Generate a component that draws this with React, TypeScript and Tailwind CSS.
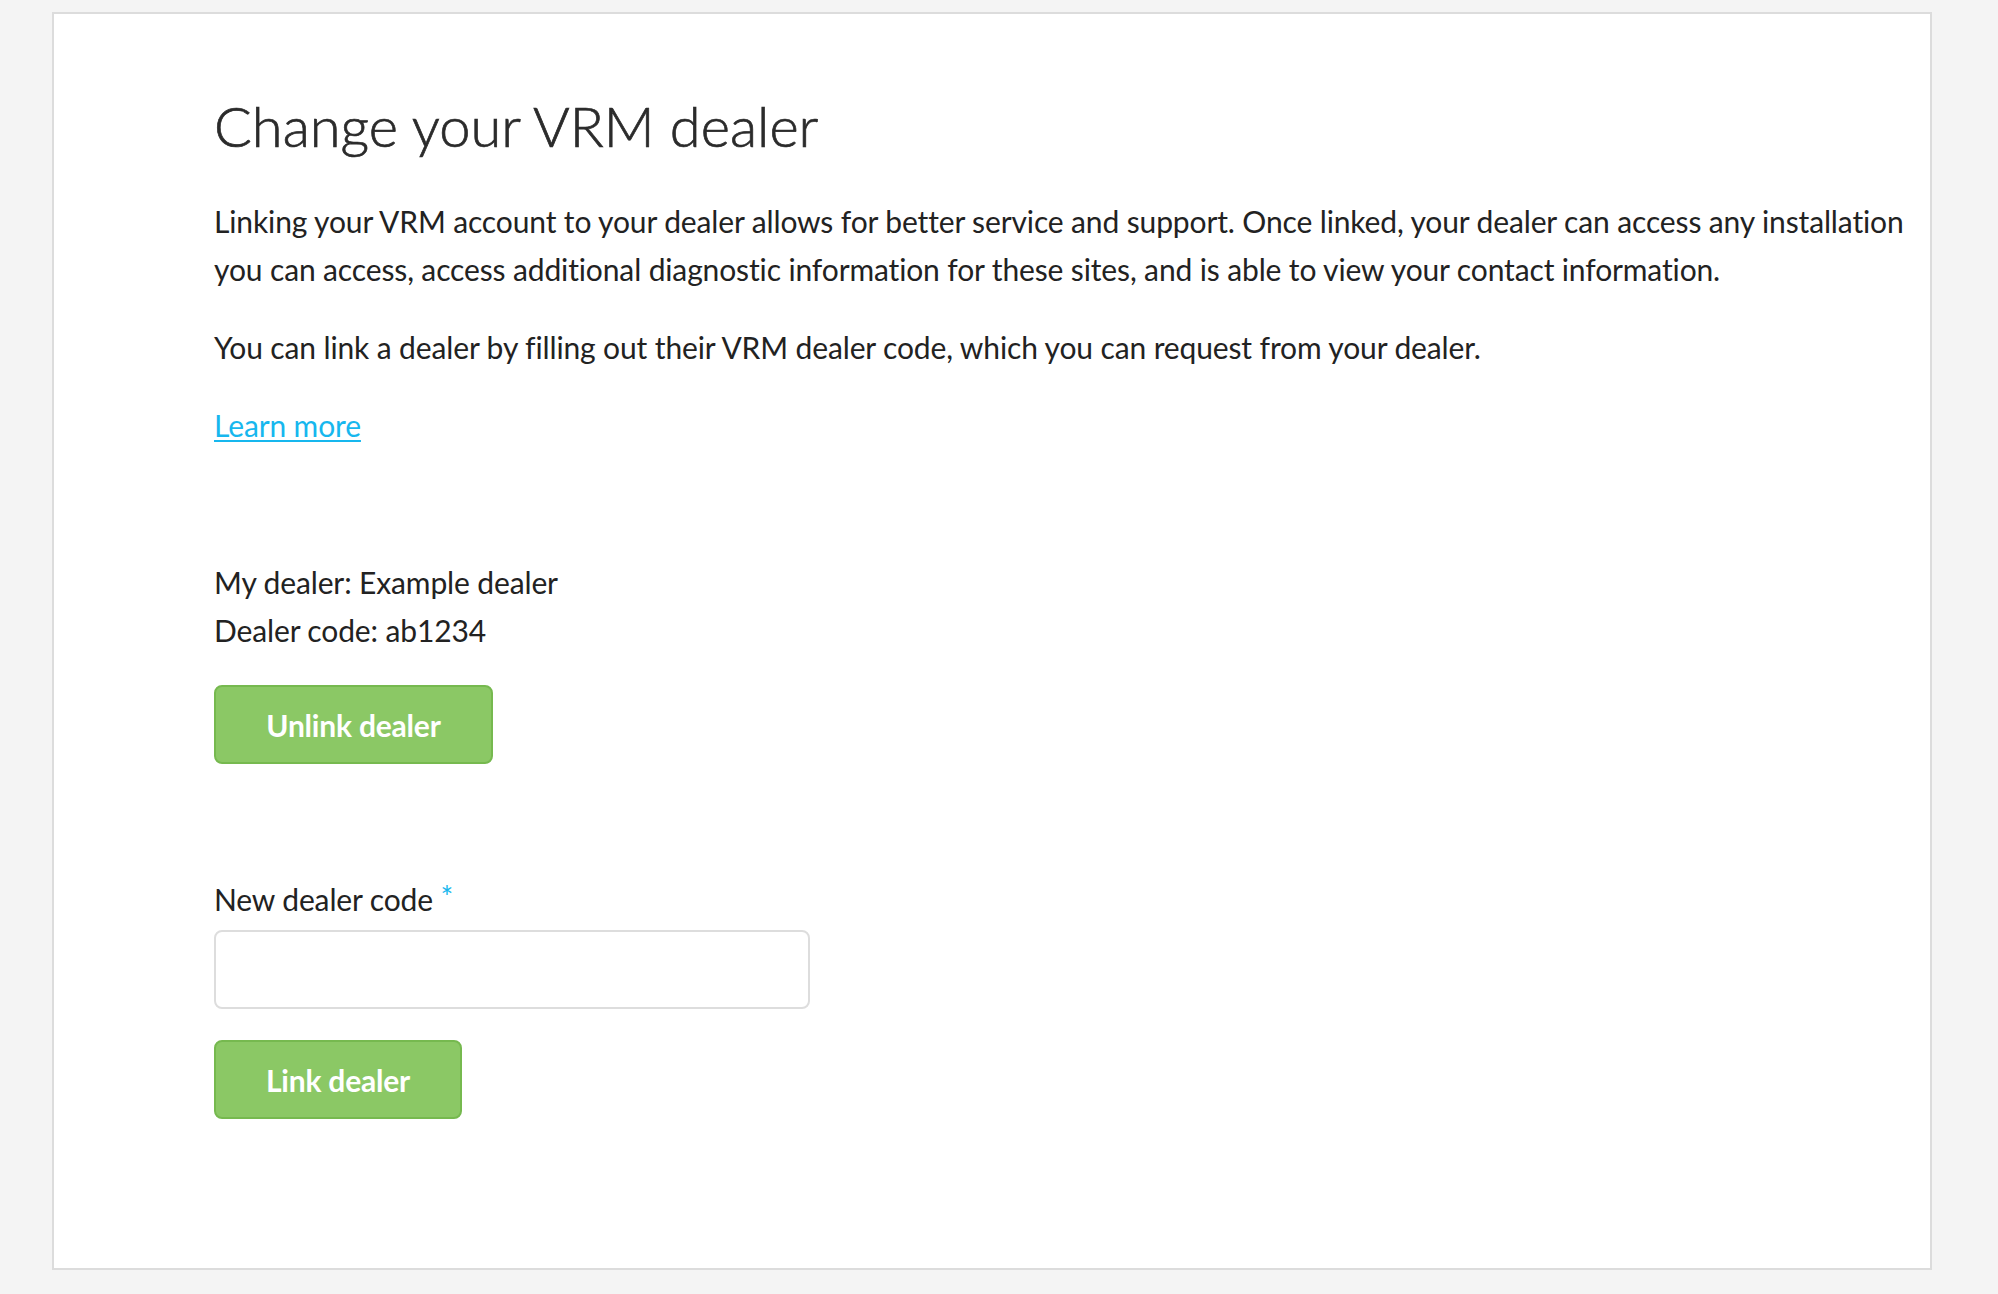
const textFont = { fontFamily: '"Lato", "Liberation Sans", sans-serif' };

const GreenButton = ({ label, width }: { label: string; width: string }) => {
  return (
    <button
      type="button"
      className={`${width} h-[79px] rounded-[8px] border-2 border-[#76b94f] bg-[#8bc865] text-white text-[30px] font-bold leading-none tracking-[-0.2px]`}
    >
      {label}
    </button>
  );
};

const App = () => {
  return (
    <div className="w-full min-h-screen bg-[#f4f4f4] pt-[12px] pb-[24px]" style={textFont}>
      <div className="ml-[52px] w-[1880px] h-[1258px] bg-white border-2 border-[#dcdcdc] pl-[160px] pt-[84px] pr-[8px]">
        <h1 className="text-[56px] leading-[56px] font-light text-[#2b2b2b] [-webkit-text-stroke:0.7px_#2b2b2b]">
          Change your VRM dealer
        </h1>
        <div className="mt-[43px] text-[30px] leading-[48px] text-[#222] tracking-[-0.13px]">
          <p className="mb-[30px]">
            Linking your VRM account to your dealer allows for better service and support. Once linked, your dealer
            can access any installation you can access, access additional diagnostic information for these sites, and
            is able to view your contact information.
          </p>
          <p className="mb-[30px]">
            You can link a dealer by filling out their VRM dealer code, which you can request from your dealer.
          </p>
          <a href="#" className="text-[#17b7ee] underline decoration-2 underline-offset-[3px]">
            Learn more
          </a>

          <div className="mt-[109px]">
            <p>My dealer: Example dealer</p>
            <p>Dealer code: ab1234</p>
          </div>
          <div className="mt-[31px]">
            <GreenButton label="Unlink dealer" width="w-[279px]" />
          </div>

          <div className="mt-[111px]">
            <label className="block">
              New dealer code <span className="text-[30px] text-[#17b7ee] relative -top-[3px]">*</span>
            </label>
            <input
              type="text"
              className="mt-[7px] block w-[596px] h-[79px] rounded-[8px] border-2 border-[#dddddd] bg-white px-4 outline-none"
            />
            <div className="mt-[31px]">
              <GreenButton label="Link dealer" width="w-[248px]" />
            </div>
          </div>
        </div>
      </div>
    </div>
  );
};

export default App;
